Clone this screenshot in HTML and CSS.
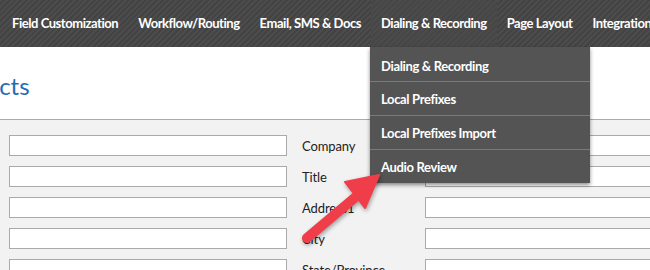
FILE: index.html
```html
<!DOCTYPE html>
<html>
<head>
<meta charset="utf-8">
<link rel="stylesheet" href="styles.css">
</head>
<body>
<div class="page">
  <div class="topbar">
    <div class="edge"></div>
    <nav class="nav">
      <div class="nav-item">Field Customization</div>
      <div class="nav-item">Workflow/Routing</div>
      <div class="nav-item">Email, SMS &amp; Docs</div>
      <div class="nav-item active">Dialing &amp; Recording
        <ul class="dropdown">
          <li>Dialing &amp; Recording</li>
          <li>Local Prefixes</li>
          <li>Local Prefixes Import</li>
          <li>Audio Review</li>
        </ul>
      </div>
      <div class="nav-item">Page Layout</div>
      <div class="nav-item">Integrations</div>
    </nav>
  </div>
  <div class="header">
    <h1 class="title">Contacts</h1>
  </div>
  <div class="form">
    <div class="grid">
      <div class="input"></div><div class="label">Company</div><div class="input"></div>
      <div class="input"></div><div class="label">Title</div><div class="input"></div>
      <div class="input"></div><div class="label">Address1</div><div class="input"></div>
      <div class="input"></div><div class="label">City</div><div class="input"></div>
      <div class="input"></div><div class="label">State/Province</div><div class="input"></div>
    </div>
  </div>
  <svg class="arrow" width="650" height="270" viewBox="0 0 650 270">
    <line x1="307" y1="238" x2="358" y2="195" stroke="#ef3e49" stroke-width="10" stroke-linecap="round"/>
    <polygon points="379,175 345,182 365,208" fill="#ef3e49" stroke="#ef3e49" stroke-width="2" stroke-linejoin="round"/>
  </svg>
</div>
</body>
</html>
```
FILE: styles.css
```css
html, body {
  margin: 0;
  padding: 0;
  background: #fff;
}
.page {
  position: relative;
  width: 650px;
  height: 270px;
  overflow: hidden;
  font-family: Lato, "Open Sans", sans-serif;
}
.topbar {
  display: flex;
  height: 47px;
  background: #fff;
}
.edge {
  width: 3px;
  height: 44px;
  background: #393939;
}
.nav {
  flex: 1;
  display: flex;
  height: 47px;
  padding-left: 2px;
  background: repeating-linear-gradient(135deg, #4c4c4c 0 2px, #434343 2px 4px);
  white-space: nowrap;
}
.nav-item {
  position: relative;
  padding: 0 10px;
  line-height: 46px;
  color: #fff;
  font-weight: 700;
  font-size: 13px;
  letter-spacing: -0.45px;
}
.nav-item.active {
  background: repeating-linear-gradient(135deg, #4b4b4b 0 2px, #464646 2px 4px);
}
.dropdown {
  position: absolute;
  top: 47px;
  left: -1px;
  width: 220px;
  margin: 0;
  padding: 0;
  list-style: none;
  background: #545454;
  box-shadow: 0 2px 4px rgba(0, 0, 0, 0.45);
  z-index: 5;
  letter-spacing: -0.35px;
}
.dropdown li {
  height: 33px;
  line-height: 34px;
  padding-left: 11px;
  border-bottom: 1px solid #7a7a7a;
}
.dropdown li:first-child {
  height: 34px;
  line-height: 38px;
}
.dropdown li:last-child {
  border-bottom: none;
}
.header {
  height: 72px;
}
.title {
  margin: 0 0 0 -64px;
  padding-top: 25px;
  font-size: 24px;
  font-weight: 400;
  color: #1f6db3;
  line-height: 28px;
}
.form {
  border-top: 1px solid #aaa;
  background: #f2f2f2;
  padding: 15px 0 0 9px;
  height: 200px;
}
.grid {
  display: grid;
  grid-template-columns: 278px 108px 300px;
  column-gap: 15px;
  row-gap: 10px;
  align-items: center;
}
.input {
  height: 19px;
  background: #fff;
  border: 1px solid #aaa;
}
.label {
  font-size: 13px;
  letter-spacing: -0.1px;
  color: #222;
  white-space: nowrap;
}
.arrow {
  position: absolute;
  left: 0;
  top: 0;
  z-index: 10;
  pointer-events: none;
  filter: drop-shadow(1px 2px 2px rgba(0, 0, 0, 0.35));
}
```
